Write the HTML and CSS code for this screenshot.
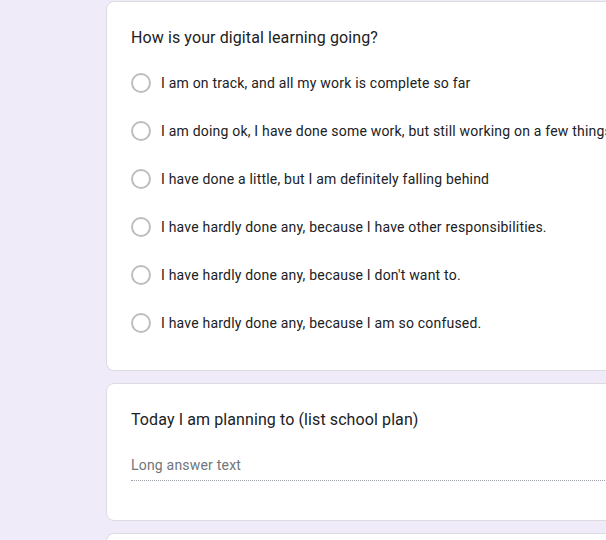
FILE: index.html
```html
<!DOCTYPE html>
<html>
<head>
<meta charset="utf-8">
<link rel="stylesheet" href="styles.css">
</head>
<body>
<div class="page">
  <div class="card card-choice">
    <div class="title">How is your digital learning going?</div>
    <div class="options">
      <div class="option"><span class="radio"></span><span class="label">I am on track, and all my work is complete so far</span></div>
      <div class="option"><span class="radio"></span><span class="label">I am doing ok, I have done some work, but still working on a few things</span></div>
      <div class="option"><span class="radio"></span><span class="label">I have done a little, but I am definitely falling behind</span></div>
      <div class="option"><span class="radio"></span><span class="label">I have hardly done any, because I have other responsibilities.</span></div>
      <div class="option"><span class="radio"></span><span class="label">I have hardly done any, because I don't want to.</span></div>
      <div class="option"><span class="radio"></span><span class="label">I have hardly done any, because I am so confused.</span></div>
    </div>
  </div>
  <div class="card card-long">
    <div class="title">Today I am planning to (list school plan)</div>
    <div class="long-answer">Long answer text</div>
  </div>
  <div class="card card-next"></div>
</div>
</body>
</html>
```
FILE: styles.css
```css
html, body {
  margin: 0;
  padding: 0;
}
body {
  background: #f0ebf8;
  font-family: Roboto, "Liberation Sans", Arial, sans-serif;
  color: #202124;
  overflow: hidden;
  width: 606px;
  height: 540px;
}
.page {
  padding: 1px 0 0 106px;
  display: flex;
  flex-direction: column;
  gap: 12px;
}
.card {
  width: 700px;
  box-sizing: border-box;
  background: #fff;
  border: 1px solid #dadce0;
  border-radius: 8px;
  padding: 24px 24px 23px 24px;
}
.title {
  font-size: 16px;
  line-height: 24px;
  letter-spacing: 0.1px;
  color: #202124;
}
.options {
  margin-top: 9px;
  display: flex;
  flex-direction: column;
}
.option {
  height: 48px;
  display: flex;
  align-items: center;
  white-space: nowrap;
}
.radio {
  width: 20px;
  height: 20px;
  box-sizing: border-box;
  border: 2px solid #bdbdbd;
  border-radius: 50%;
  flex: none;
  margin-right: 10px;
}
.label {
  font-size: 14px;
  line-height: 20px;
  letter-spacing: 0.2px;
  color: #202124;
}
.card-long {
  padding-bottom: 39px;
}
.long-answer {
  margin-top: 23px;
  font-size: 14px;
  line-height: 20px;
  letter-spacing: 0.2px;
  color: #70757a;
  padding-bottom: 5px;
  border-bottom: 1px dotted #9aa0a6;
}
.card-next {
  height: 100px;
}
```
